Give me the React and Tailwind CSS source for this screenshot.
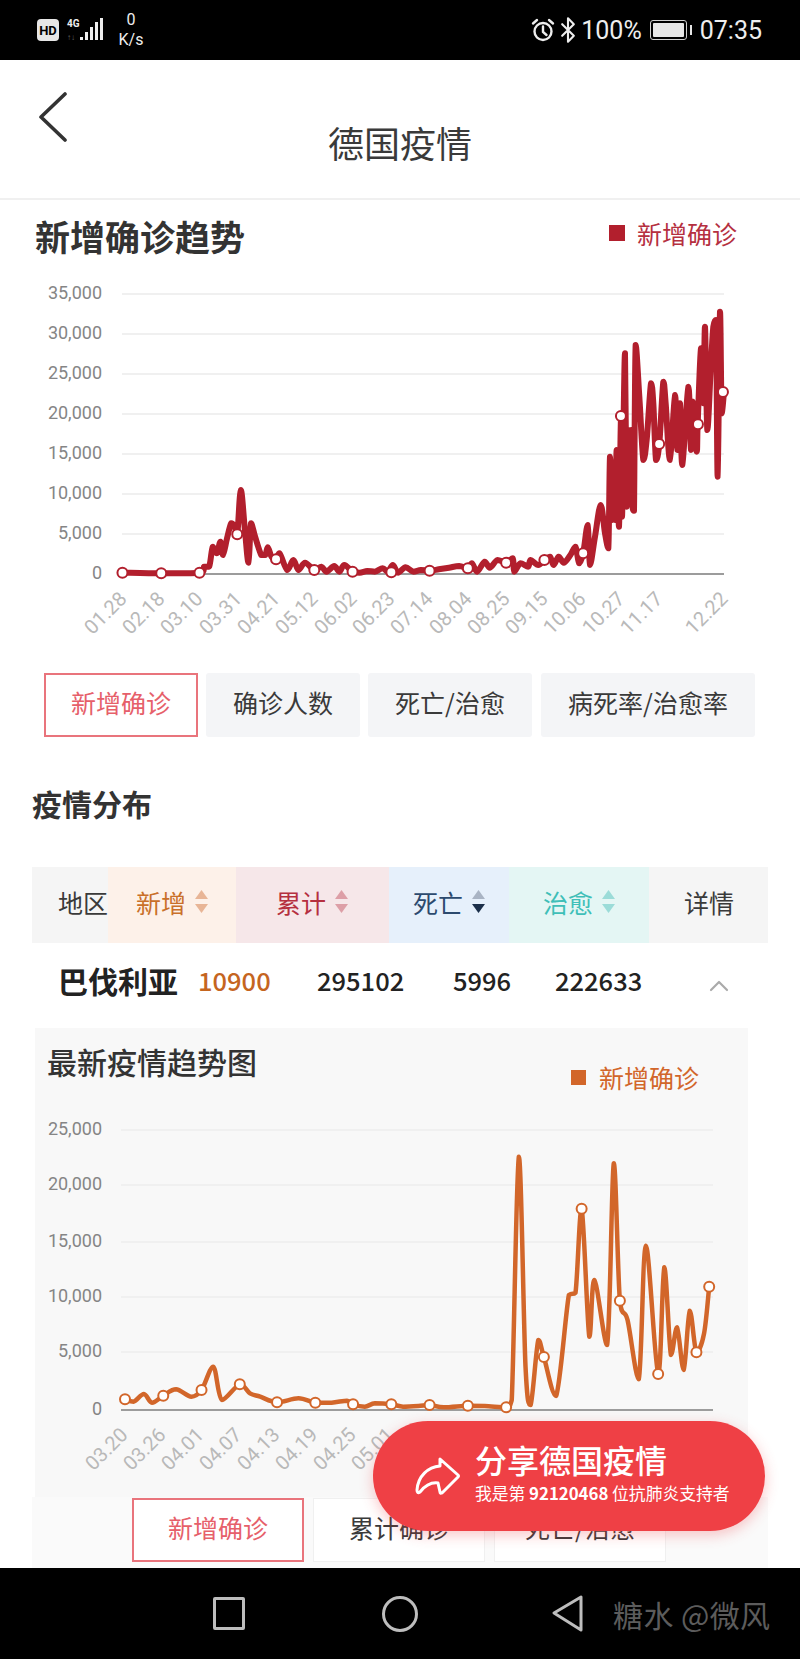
import React from 'react';
import { Bluetooth, ChevronUp } from 'lucide-react';

// traced from the picture, in page pixels
const fromWide = (pts, top) => pts.map(([x, y]) => [x / 1.96, top + y / 3]);
const fromClose = (pts) => pts.map(([x, y]) => [500 + x / 3, 270 + y / 3]);

const trendLine = [
  ...fromWide([
    [240, 908], [316, 910], [391, 908], [400, 890], [410, 890], [417, 830], [425, 850], [432, 815], [437, 855],
    [445, 805], [453, 760], [460, 770], [465, 795], [472, 660], [480, 780], [487, 878], [492, 760], [500, 800],
    [512, 855], [520, 855], [525, 832], [532, 860], [541, 868], [548, 850], [563, 900], [575, 870], [585, 900],
    [598, 878], [616, 900], [630, 890], [640, 905], [655, 888], [665, 905], [675, 885], [691, 905], [705, 908],
    [720, 903], [735, 905], [750, 895], [760, 905], [770, 885], [780, 908], [795, 892], [810, 905], [825, 900],
    [842, 902], [860, 898], [880, 893], [900, 888], [917, 895], [925, 880], [935, 905], [950, 875], [960, 893],
    [975, 870], [992, 878], [1005, 865], [1008, 905], [1020, 880], [1035, 890], [1040, 870], [1055, 885],
    [1067, 870], [1078, 860], [1085, 885], [1095, 860], [1105, 878], [1118, 855], [1128, 830], [1135, 880],
    [1143, 850],
  ], 270),
  ...fromClose([
    [263, 765], [270, 885], [285, 800], [302, 705], [315, 790], [325, 835], [330, 560], [336, 750], [342, 580],
    [346, 750], [350, 540], [357, 770], [363, 438], [366, 740], [370, 500], [375, 250], [380, 710], [385, 480],
    [390, 700], [394, 480], [398, 715], [402, 722], [407, 225], [418, 380], [430, 570], [440, 510], [453, 340],
    [460, 400], [468, 570], [478, 520], [490, 335], [497, 400], [510, 570], [525, 375], [532, 540], [540, 400],
    [547, 585], [565, 350], [573, 540], [578, 395], [590, 545], [593, 463], [603, 235], [610, 400], [615, 170],
    [622, 480], [632, 300], [640, 170], [648, 150], [653, 620], [660, 125], [665, 430], [672, 366],
  ]),
];

const trendDots = [
  ...fromWide([
    [240, 908], [316, 910], [391, 908], [465, 793], [541, 868], [616, 900], [691, 905], [767, 907], [842, 902],
    [917, 895], [992, 878], [1067, 870], [1143, 850], [1217, 438], [1292, 522], [1368, 463], [1417, 366],
  ], 270),
];

const stateLine = fromWide([
  [245, 898], [262, 905], [282, 882], [298, 908], [320, 887], [345, 868], [375, 890], [395, 870], [418, 800],
  [435, 900], [470, 853], [490, 880], [510, 890], [543, 907], [585, 895], [618, 908], [650, 908], [680, 902],
  [692, 913], [715, 920], [735, 910], [767, 913], [790, 920], [820, 918], [842, 915], [870, 922], [917, 917],
  [950, 918], [992, 922], [1003, 900], [1017, 170], [1030, 800], [1040, 915], [1055, 720], [1066, 771], [1090, 888],
  [1115, 585], [1128, 578], [1140, 326], [1155, 710], [1165, 540], [1190, 735], [1203, 190], [1215, 602], [1230, 660],
  [1252, 838], [1266, 437], [1290, 822], [1302, 502], [1315, 765], [1327, 682], [1340, 810], [1352, 632], [1365, 757],
  [1380, 700], [1390, 560],
], 1100);

const stateDots = fromWide([
  [245, 898], [320, 887], [395, 870], [470, 853], [543, 907], [618, 908], [692, 913], [767, 913], [842, 915],
  [917, 917], [992, 922], [1066, 771], [1140, 326], [1215, 602], [1290, 822], [1365, 757], [1390, 560],
], 1100);

const clamp = (v, a, b) => Math.min(Math.max(a, b), Math.max(Math.min(a, b), v));

// catmull-rom, with the handles kept inside each segment so peaks don't overshoot
const smooth = (pts) => {
  let d = `M${pts[0][0]} ${pts[0][1]}`;
  for (let i = 0; i < pts.length - 1; i++) {
    const a = pts[i - 1] || pts[i];
    const b = pts[i];
    const c = pts[i + 1];
    const e = pts[i + 2] || c;
    const c1 = [b[0] + (c[0] - a[0]) / 6, clamp(b[1] + (c[1] - a[1]) / 6, b[1], c[1])];
    const c2 = [c[0] - (e[0] - b[0]) / 6, clamp(c[1] - (e[1] - b[1]) / 6, b[1], c[1])];
    d += ` C${c1[0]} ${c1[1]} ${c2[0]} ${c2[1]} ${c[0]} ${c[1]}`;
  }
  return d;
};

const Chart = ({ box, x1, x2, ticks, labels, line, dots, color, width, labelY, className }) => (
  <svg viewBox={box} className={`block font-['Roboto',sans-serif] ${className}`}>
    {ticks.map(([text, y], i) => (
      <g key={text}>
        <line
          x1={x1}
          x2={x2}
          y1={y}
          y2={y}
          stroke={i === ticks.length - 1 ? '#9c9c9c' : '#f0f0f0'}
          strokeWidth="2"
        />
        <text x="102" y={y + 5} textAnchor="end" fontSize="18" fill="#858585">{text}</text>
      </g>
    ))}
    {labels.map(([text, x]) => (
      <text
        key={text}
        x={x}
        y={labelY}
        textAnchor="end"
        fontSize="20"
        fill="#b9b9b9"
        transform={`rotate(-45 ${x} ${labelY})`}
      >
        {text}
      </text>
    ))}
    <path d={smooth(line)} fill="none" stroke={color} strokeWidth={width} strokeLinejoin="round" strokeLinecap="round" />
    {dots.map(([x, y]) => (
      <circle key={x} cx={x} cy={y} r="5" fill="#fff" stroke={color} strokeWidth="2" />
    ))}
  </svg>
);

const SortArrows = ({ up, down }) => (
  <svg width="13" height="24" viewBox="0 0 13 24" className="ml-[9px] block">
    <path d="M6.5 0 L13 9 H0 Z" fill={up} />
    <path d="M0 14 H13 L6.5 23 Z" fill={down} />
  </svg>
);

const Tab = ({ children, active, className }) => (
  <div
    className={`flex h-full items-center justify-center pb-[6px] text-[25px] leading-none ${
      active ? 'border-2 border-[#e9747c] text-[#e6606a]' : 'text-[#3a3a3a]'
    } ${className}`}
  >
    {children}
  </div>
);

const App = () => {
  return (
    <div className="relative h-[1659px] w-[800px] overflow-hidden bg-white font-['Noto_Sans_CJK_SC',sans-serif] text-[#333]">
      {/* status bar */}
      <div className="flex h-[60px] items-center justify-between bg-black pl-[37px] pr-[38px] font-['Roboto',sans-serif] text-[#eee]">
        <div className="flex items-center">
          <div className="flex h-[22px] w-[22px] items-center justify-center rounded-[4px] bg-[#e6e6e6] text-[13px] font-bold leading-none text-black">
            HD
          </div>
          <div className="ml-[8px] flex h-[24px] w-[13px] flex-col items-start justify-between">
            <span className="text-[10px] font-bold leading-[11px]">4G</span>
            <span className="text-[8px] leading-[9px] text-[#666]">↑↓</span>
          </div>
          <svg width="24" height="24" viewBox="0 0 24 24" className="block">
            <g fill="#eee">
              <rect x="0" y="19" width="3" height="3" />
              <rect x="5" y="14" width="3" height="8" />
              <rect x="10" y="9" width="3" height="13" />
              <rect x="15" y="4" width="3" height="18" />
              <rect x="20" y="0" width="3" height="22" />
            </g>
          </svg>
          <div className="ml-[14px] flex w-[26px] flex-col items-center text-[16px] leading-[20px]">
            <span>0</span>
            <span>K/s</span>
          </div>
        </div>
        <div className="flex items-center text-[25px] leading-none">
          <svg width="24" height="24" viewBox="0 0 24 24" fill="none" stroke="#eee" strokeWidth="2.4" strokeLinecap="round" className="block">
            <circle cx="12" cy="13.5" r="8.5" />
            <path d="M12 8.5 V14 L15.5 17" />
            <path d="M2 5.5 L6 2" />
            <path d="M22 5.5 L18 2" />
          </svg>
          <Bluetooth size={28} strokeWidth={1.8} className="ml-[-1px] text-[#eee]" />
          <span className="ml-[-1px]">100%</span>
          <div className="ml-[8px] flex items-center">
            <div className="h-[20px] w-[37px] rounded-[3px] border border-[#cfcfcf] p-[2px]">
              <div className="h-full w-full rounded-[1px] bg-[#e6e6e6]" />
            </div>
            <div className="ml-[3px] h-[10px] w-[2px] bg-[#e6e6e6]" />
          </div>
          <span className="ml-[8px]">07:35</span>
        </div>
      </div>

      {/* header */}
      <div className="grid h-[140px] grid-cols-[1fr_auto_1fr] border-b-2 border-[#f0f0f0]">
        <div className="pl-[38px] pt-[32px]">
          <svg width="30" height="50" viewBox="0 0 30 50" fill="none" stroke="#333" strokeWidth="3.6" strokeLinecap="round" strokeLinejoin="round" className="block">
            <path d="M27 2 L3 25 L27 48" />
          </svg>
        </div>
        <div className="pt-[58px] text-[36px] leading-[48px] text-[#3a3a3a]">德国疫情</div>
        <div />
      </div>

      {/* trend */}
      <div className="flex h-[76px] items-start justify-between pl-[35px] pr-[63px] pt-[14px]">
        <div className="text-[35px] font-bold leading-[44px] text-[#333]">新增确诊趋势</div>
        <div className="flex items-center pt-[2px] text-[25px] leading-[34px] text-[#b5303f]">
          <div className="h-[16px] w-[16px] bg-[#b21f2d]" />
          <span className="ml-[12px]">新增确诊</span>
        </div>
      </div>
      <Chart
        box="0 276 800 384"
        className="h-[384px] w-[800px]"
        x1={122}
        x2={724}
        ticks={[
          ['35,000', 294], ['30,000', 334], ['25,000', 374], ['20,000', 414],
          ['15,000', 454], ['10,000', 494], ['5,000', 534], ['0', 574],
        ]}
        labels={[
          ['01.28', 128], ['02.18', 166], ['03.10', 204], ['03.31', 243], ['04.21', 281], ['05.12', 319],
          ['06.02', 358], ['06.23', 396], ['07.14', 434], ['08.04', 473], ['08.25', 511], ['09.15', 549],
          ['10.06', 587], ['10.27', 626], ['11.17', 664], ['12.22', 729],
        ]}
        labelY={600}
        line={trendLine}
        dots={trendDots}
        color="#b21f2d"
        width={6}
      />
      <div className="mt-[13px] flex h-[64px] pl-[44px]">
        <Tab active className="w-[154px]">新增确诊</Tab>
        <Tab className="ml-[8px] w-[154px] rounded-[3px] bg-[#f4f5f7]">确诊人数</Tab>
        <Tab className="ml-[8px] w-[164px] rounded-[3px] bg-[#f4f5f7]">死亡/治愈</Tab>
        <Tab className="ml-[9px] w-[214px] rounded-[3px] bg-[#f4f5f7]">病死率/治愈率</Tab>
      </div>

      {/* distribution */}
      <div className="mt-[47px] pl-[32px] text-[30px] font-bold leading-[38px] text-[#333]">疫情分布</div>

      <div className="mx-[32px] mt-[45px] flex h-[76px] whitespace-nowrap text-[25px] leading-none">
        <div className="flex w-[76px] items-center bg-[#f5f5f5] pb-[6px] pl-[26px] text-[#3a3a3a]">地区</div>
        <div className="flex w-[128px] items-center bg-[#fdf1e9] pb-[6px] pl-[28px] text-[#c9702a]">
          新增
          <SortArrows up="#e8b596" down="#e8b596" />
        </div>
        <div className="flex w-[153px] items-center bg-[#f6e7e9] pb-[6px] pl-[40px] text-[#b5303f]">
          累计
          <SortArrows up="#dd9fa7" down="#dd9fa7" />
        </div>
        <div className="flex w-[120px] items-center bg-[#e6f0fb] pb-[6px] pl-[24px] text-[#2c4a6e]">
          死亡
          <SortArrows up="#a9b4c4" down="#1b2f4a" />
        </div>
        <div className="flex w-[140px] items-center bg-[#e4f6f4] pb-[6px] pl-[34px] text-[#3fbfb8]">
          治愈
          <SortArrows up="#9bdcd8" down="#9bdcd8" />
        </div>
        <div className="flex flex-1 items-center bg-[#f5f5f5] pb-[6px] pl-[35px] text-[#3a3a3a]">详情</div>
      </div>

      <div className="flex h-[85px] items-center pb-[11px] pl-[58px] text-[25.5px] font-medium leading-none text-[#222]">
        <div className="w-[140px] text-[30px] font-bold">巴伐利亚</div>
        <div className="w-[119px] text-[#c5651f]">10900</div>
        <div className="w-[136px]">295102</div>
        <div className="w-[102px]">5996</div>
        <div className="w-[148px]">222633</div>
        <ChevronUp size={32} strokeWidth={1.6} className="mt-[11px] text-[#aaa]" />
      </div>

      {/* state panel */}
      <div className="mx-[35px] h-[469px] w-[713px] bg-[#f8f8f8]">
        <div className="flex h-[72px] justify-between pl-[12px] pr-[49px] pt-[13px]">
          <div className="text-[30px] font-medium leading-[40px] text-[#333]">最新疫情趋势图</div>
          <div className="mb-[6px] flex h-[34px] items-center self-end text-[25px] leading-[34px] text-[#d2662a]">
            <div className="h-[15px] w-[15px] bg-[#d2662a]" />
            <span className="ml-[13px]">新增确诊</span>
          </div>
        </div>
        <Chart
          box="35 1100 713 397"
          className="h-[397px] w-[713px]"
          x1={121}
          x2={713}
          ticks={[
            ['25,000', 1130], ['20,000', 1185], ['15,000', 1242],
            ['10,000', 1297], ['5,000', 1352], ['0', 1410],
          ]}
          labels={[
            ['03.20', 129], ['03.26', 167], ['04.01', 205], ['04.07', 243],
            ['04.13', 281], ['04.19', 319], ['04.25', 357], ['05.01', 395],
          ]}
          labelY={1436}
          line={stateLine}
          dots={stateDots}
          color="#d2662a"
          width={4.5}
        />
      </div>
      <div className="mx-[32px] flex h-[71px] bg-[#fafafa] pl-[100px] pt-[1px]">
        <Tab active className="h-[64px]! w-[172px] bg-white">新增确诊</Tab>
        <Tab className="ml-[9px] h-[64px]! w-[172px] border border-[#f0f0f0] bg-white">累计确诊</Tab>
        <Tab className="ml-[9px] h-[64px]! w-[172px] border border-[#f0f0f0] bg-white">死亡/治愈</Tab>
      </div>

      {/* nav bar */}
      <div className="flex h-[91px] items-center bg-black">
        <div className="ml-[213px] h-[33px] w-[32px] rounded-[2px] border-[3px] border-[#bdbdbd]" />
        <div className="ml-[137px] h-[36px] w-[36px] rounded-full border-[3px] border-[#bdbdbd]" />
        <svg width="34" height="38" viewBox="0 0 34 38" fill="none" stroke="#bdbdbd" strokeWidth="3" strokeLinejoin="round" className="ml-[132px] block">
          <path d="M31 2 V35 L4 18 Z" />
        </svg>
        <div className="ml-[29px] whitespace-nowrap text-[30px] tracking-[0.4px] leading-none text-[#5c5c5c]">糖水 @微风</div>
      </div>

      {/* floating share button */}
      <div className="absolute left-[373px] top-[1421px] flex h-[110px] w-[392px] items-center rounded-full bg-[#ef4045] shadow-[0_4px_14px_rgba(239,64,69,0.3)]">
        <svg width="48" height="40" viewBox="0 0 48 40" fill="none" stroke="#fff" strokeWidth="3" strokeLinejoin="round" className="ml-[41px] block">
          <path d="M26 3 L44 19 Q45 20 44 21 L28 37 Q26 38 26 36 L24 27 C16 26 10 31 6 36 Q3 38 3 34 C4 20 14 11 26 10 Z" />
        </svg>
        <div className="ml-[13px] pb-[10px] text-white">
          <div className="text-[32px] font-medium leading-[42px]">分享德国疫情</div>
          <div className="mt-[2px] whitespace-nowrap text-[16.8px] leading-[22px]">
            我是第 <span className="font-bold">92120468</span> 位抗肺炎支持者
          </div>
        </div>
      </div>
    </div>
  );
};

export default App;
